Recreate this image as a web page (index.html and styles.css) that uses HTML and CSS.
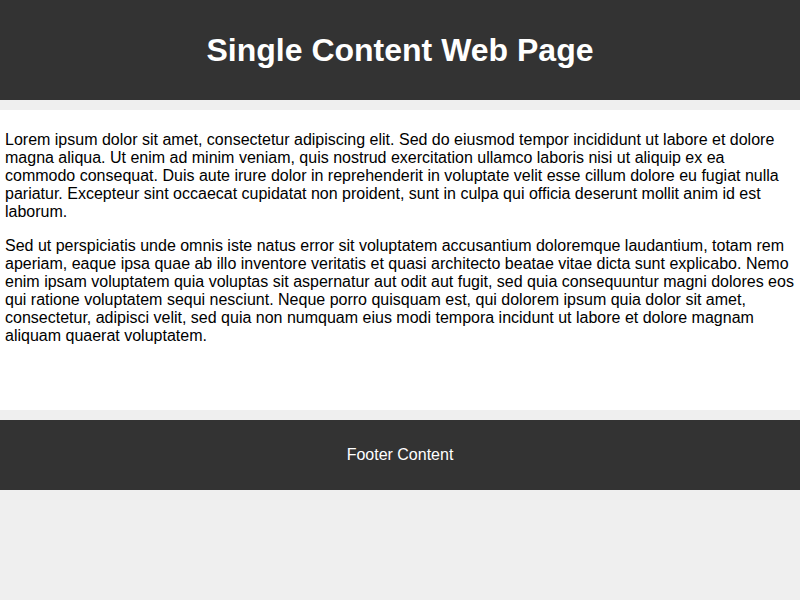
FILE: index.html
```html
<!DOCTYPE html>
<html lang="en">
<head>
<meta charset="utf-8">
<title>Single Content Web Page</title>
<link rel="stylesheet" href="styles.css">
</head>
<body>
<header class="site-header">
  <h1 class="site-title">Single Content Web Page</h1>
</header>
<main class="content">
  <p>Lorem ipsum dolor sit amet, consectetur adipiscing elit. Sed do eiusmod tempor incididunt ut labore et dolore magna aliqua. Ut enim ad minim veniam, quis nostrud exercitation ullamco laboris nisi ut aliquip ex ea commodo consequat. Duis aute irure dolor in reprehenderit in voluptate velit esse cillum dolore eu fugiat nulla pariatur. Excepteur sint occaecat cupidatat non proident, sunt in culpa qui officia deserunt mollit anim id est laborum.</p>
  <p>Sed ut perspiciatis unde omnis iste natus error sit voluptatem accusantium doloremque laudantium, totam rem aperiam, eaque ipsa quae ab illo inventore veritatis et quasi architecto beatae vitae dicta sunt explicabo. Nemo enim ipsam voluptatem quia voluptas sit aspernatur aut odit aut fugit, sed quia consequuntur magni dolores eos qui ratione voluptatem sequi nesciunt. Neque porro quisquam est, qui dolorem ipsum quia dolor sit amet, consectetur, adipisci velit, sed quia non numquam eius modi tempora incidunt ut labore et dolore magnam aliquam quaerat voluptatem.</p>
</main>
<footer class="site-footer">
  <span class="footer-text">Footer Content</span>
</footer>
</body>
</html>
```

FILE: styles.css
```css
html, body {
  margin: 0;
  padding: 0;
}

body {
  background: #efefef;
  font-family: "Liberation Sans", Arial, sans-serif;
  font-size: 16px;
  color: #000;
}

.site-header {
  height: 100px;
  background: #333333;
  color: #ffffff;
  display: flex;
  align-items: center;
  justify-content: center;
}

.site-title {
  margin: 0;
  font-size: 32px;
  font-weight: bold;
}

.content {
  background: #ffffff;
  margin: 10px 0;
  padding: 5px;
  height: 300px;
  box-sizing: border-box;
}

.content p {
  margin: 16px 0;
}

.site-footer {
  height: 70px;
  background: #333333;
  color: #ffffff;
  display: flex;
  align-items: center;
  justify-content: center;
}
```
